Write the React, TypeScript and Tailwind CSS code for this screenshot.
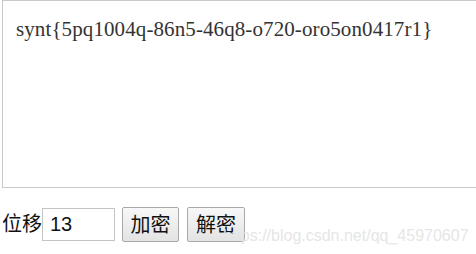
import React from "react";

export default function App() {
  return (
    <div className="relative w-[476px] h-[254px] overflow-hidden bg-white">
      {/* Cipher text area */}
      <div className="pl-[2px]">
        <textarea
          readOnly
          defaultValue="synt{5pq1004q-86n5-46q8-o720-oro5on0417r1}"
          className="block w-[490px] h-[188px] resize-none border border-[#c9c9c9] pl-[13px] pt-[16px] text-[21px] tracking-[0.1px] leading-[24px] text-[#333] outline-none"
          style={{ fontFamily: '"Liberation Serif", serif' }}
        />
      </div>

      {/* Controls */}
      <div
        className="mt-[19px] flex items-end pl-[2px] text-[20px] text-[#111]"
        style={{ fontFamily: '"Liberation Sans", "Noto Sans CJK SC", sans-serif' }}
      >
        <span className="mb-[1px] h-[33px] leading-[33px]">位移</span>
        <input
          readOnly
          defaultValue="13"
          className="mb-[1px] w-[73px] h-[33px] border border-[#c4c4c4] px-[7px] text-[20px] text-[#111] outline-none"
        />
        <button className="ml-[7px] h-[35px] w-[57px] rounded-[2px] border border-[#a9a9a9] bg-gradient-to-b from-[#f8f8f8] to-[#e3e3e3] text-[20px] leading-none">
          加密
        </button>
        <button className="ml-[8px] h-[35px] w-[58px] rounded-[2px] border border-[#a9a9a9] bg-gradient-to-b from-[#f8f8f8] to-[#e3e3e3] text-[20px] leading-none">
          解密
        </button>
      </div>

      {/* Watermark */}
      <div
        className="absolute left-[223px] top-[226px] text-[16px] leading-[19px] text-[#e6e6e6] pointer-events-none"
        style={{ fontFamily: '"Liberation Sans", sans-serif' }}
      >
        https://blog.csdn.net/qq_45970607
      </div>
    </div>
  );
}
